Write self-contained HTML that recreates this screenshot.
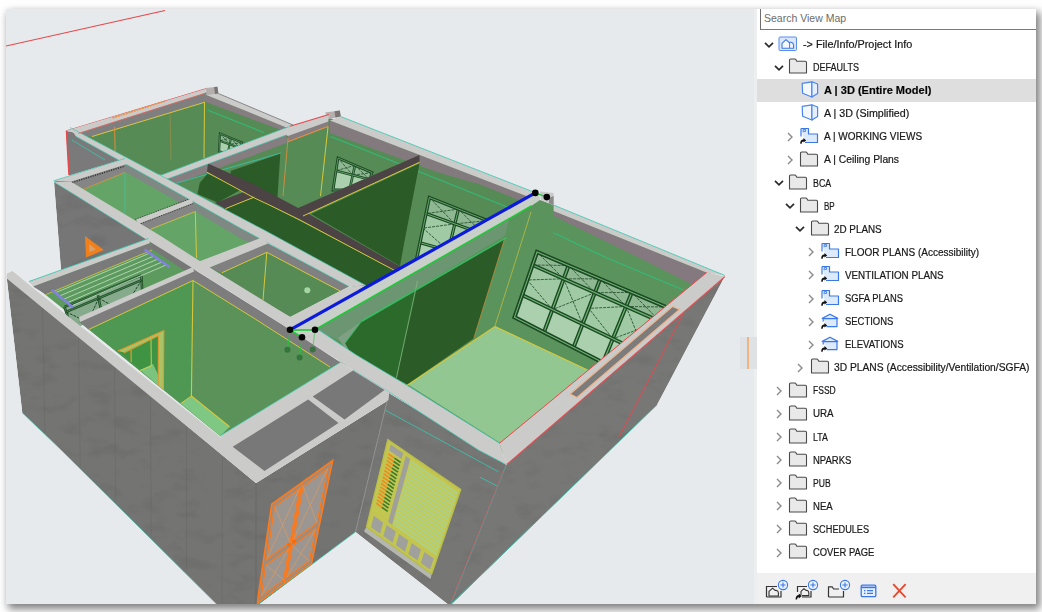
<!DOCTYPE html>
<html><head><meta charset="utf-8"><title>View Map</title>
<style>
html,body{margin:0;padding:0;background:#fff}
body{width:1042px;height:612px;overflow:hidden;position:relative;font-family:"Liberation Sans",sans-serif}
.shot{position:absolute;left:6px;top:9px;width:1030px;height:595px;background:#e6eaec;box-shadow:3px 4px 8px 1px rgba(0,0,0,.5);overflow:hidden}
.view{position:absolute;left:0;top:0;width:747.6px;height:595px;overflow:hidden}
.vstrip{position:absolute;left:747.6px;top:0;width:3.4px;height:595px;background:#eceeef}
.view svg{position:absolute;left:-6px;top:-9px}
.handle{position:absolute;left:734px;top:328px;width:17px;height:32px;background:#dee2e4}
.handle i{position:absolute;left:6.5px;top:0;height:32px;border-left:2px solid #f0b480}
.panel{position:absolute;left:751px;top:0;width:279px;height:595px;background:#fff}
.search{position:absolute;left:3px;top:0;width:276px;height:20px;border-left:1px solid #6e6e6e;border-bottom:1px solid #7a7a7a;box-sizing:content-box;background:#fff}
.search span{position:absolute;left:3px;top:3px;font-size:10.5px;color:#6b6b6b;white-space:nowrap;transform-origin:0 50%}
.row{position:absolute;left:0;width:279px;height:23px}
.row.sel{background:#dedede;left:0}
.row .ch,.row .ic{position:absolute}
.lb{position:absolute;top:5.6px;font-size:10px;line-height:13px;color:#141414;white-space:nowrap;transform-origin:0 50%;-webkit-text-stroke:0.2px #222}
.lb.b{font-weight:bold;color:#000}
.tb{position:absolute;left:0;top:564px;width:279px;height:31px;background:#f0f0f0}
.tb svg{position:absolute}
</style></head>
<body>
<div class="shot">
<div class="view">
<svg width="1042" height="612" viewBox="0 0 1042 612">
<defs><filter id="conc" x="0" y="0" width="100%" height="100%" color-interpolation-filters="sRGB"><feTurbulence type="fractalNoise" baseFrequency="0.035 0.07" numOctaves="4" seed="11" result="t"/><feColorMatrix in="t" type="matrix" values="0.4 0.4 0.2 0 0  0.4 0.4 0.2 0 0  0.4 0.4 0.2 0 0  0 0 0 0 1" result="g"/><feComponentTransfer in="g" result="g2"><feFuncR type="linear" slope="0.26" intercept="0.87"/><feFuncG type="linear" slope="0.26" intercept="0.87"/><feFuncB type="linear" slope="0.26" intercept="0.87"/></feComponentTransfer><feBlend in="SourceGraphic" in2="g2" mode="multiply" result="b"/><feComposite in="b" in2="SourceGraphic" operator="in"/></filter><clipPath id="cw1"><polygon points="72.0,131.0 205.0,92.0 290.0,126.2 161.6,174.9"/></clipPath><clipPath id="cw2"><polygon points="288.0,132.0 330.0,118.0 419.5,155.0 297.0,208.5 283.0,198.0"/></clipPath><clipPath id="cw3"><polygon points="400.0,140.0 536.0,193.5 398.0,270.0"/></clipPath><clipPath id="cw4"><polygon points="315.0,330.0 535.0,198.0 706.6,272.6 499.6,443.2 340.0,362.0"/></clipPath></defs>
<polyline points="6.0,46.0 165.0,10.5" fill="none" stroke="#e8484c" stroke-width="1.2"/>
<g filter="url(#conc)">
<polygon points="6.5,276.0 256.0,483.0 256.0,606.0 218.0,606.0 61.0,450.0 22.3,413.0" fill="#747473"/>
<polygon points="256.0,483.0 388.5,400.0 389.0,393.0 355.5,532.0 257.0,606.0 256.0,606.0" fill="#737372"/>
<polygon points="389.0,393.0 506.3,464.7 450.0,606.0 355.5,532.0" fill="#767675"/>
<polygon points="724.5,277.0 506.3,464.7 450.0,606.0 657.0,405.0" fill="#777776"/>
<polygon points="54.0,182.0 150.0,237.0 148.5,241.0 61.0,270.0" fill="#767676"/>
</g>
<polyline points="42.5,307.9 44.9,432.9" fill="none" stroke="#5c5c5c" stroke-width="0.8" opacity="0.35"/>
<polyline points="78.5,337.8 80.3,467.3" fill="none" stroke="#5c5c5c" stroke-width="0.8" opacity="0.35"/>
<polyline points="114.5,367.6 115.7,501.6" fill="none" stroke="#5c5c5c" stroke-width="0.8" opacity="0.35"/>
<polyline points="150.5,397.5 151.1,535.9" fill="none" stroke="#5c5c5c" stroke-width="0.8" opacity="0.35"/>
<polyline points="186.5,427.4 186.5,570.3" fill="none" stroke="#5c5c5c" stroke-width="0.8" opacity="0.35"/>
<polyline points="222.5,457.3 221.9,604.0" fill="none" stroke="#5c5c5c" stroke-width="0.8" opacity="0.35"/>
<polygon points="85.0,236.0 86.0,257.5 103.8,250.0" fill="#f0801c"/>
<polygon points="89.0,244.0 89.5,252.0 96.0,249.5" fill="#d9a070"/>
<polygon points="271.7,504.2 332.6,460.6 311.4,563.8 257.2,603.4" fill="#a08c7c"/>
<polygon points="274.6,506.6 299.4,488.8 290.1,542.3 266.7,559.3" fill="#9b9691" stroke="#ff7a1a" stroke-width="1.1"/>
<polyline points="274.6,506.6 290.1,542.3" fill="none" stroke="#e09a60" stroke-width="0.7"/>
<polyline points="299.4,488.8 266.7,559.3" fill="none" stroke="#e09a60" stroke-width="0.7"/>
<polygon points="265.8,565.2 289.0,548.4 283.6,579.7 261.2,596.1" fill="#9b9691" stroke="#ff7a1a" stroke-width="1.1"/>
<polyline points="265.8,565.2 283.6,579.7" fill="none" stroke="#e09a60" stroke-width="0.7"/>
<polyline points="289.0,548.4 261.2,596.1" fill="none" stroke="#e09a60" stroke-width="0.7"/>
<polygon points="303.1,486.2 327.9,468.4 316.9,522.9 293.5,539.9" fill="#9b9691" stroke="#ff7a1a" stroke-width="1.1"/>
<polyline points="303.1,486.2 316.9,522.9" fill="none" stroke="#e09a60" stroke-width="0.7"/>
<polyline points="327.9,468.4 293.5,539.9" fill="none" stroke="#e09a60" stroke-width="0.7"/>
<polygon points="292.4,545.9 315.6,529.1 309.2,561.0 286.8,577.3" fill="#9b9691" stroke="#ff7a1a" stroke-width="1.1"/>
<polyline points="292.4,545.9 309.2,561.0" fill="none" stroke="#e09a60" stroke-width="0.7"/>
<polyline points="315.6,529.1 286.8,577.3" fill="none" stroke="#e09a60" stroke-width="0.7"/>
<polygon points="271.7,504.2 332.6,460.6 311.4,563.8 257.2,603.4" fill="none" stroke="#ff7a1a" stroke-width="1.6"/>
<polyline points="302.1,482.4 284.3,583.6" fill="none" stroke="#ff7a1a" stroke-width="1.6"/>
<circle cx="289.2" cy="544.8" r="1.8" fill="#ff6a00"/>
<circle cx="293.7" cy="541.5" r="1.8" fill="#ff6a00"/>
<polygon points="387.8,439.4 460.8,489.4 431.7,574.0 366.4,527.0" fill="#c2c650"/>
<polygon points="366.4,527.0 431.7,574.0 430.5,579.0 364.0,531.5" fill="#b4b6b0"/>
<polygon points="410.9,459.4 458.2,491.8 436.2,556.1 392.7,525.2" fill="#c7cb4c"/>
<polyline points="410.4,461.3 457.5,493.7" fill="none" stroke="#a9cf92" stroke-width="2.0"/>
<polyline points="409.3,465.2 456.2,497.5" fill="none" stroke="#a9cf92" stroke-width="2.0"/>
<polyline points="408.3,469.0 454.9,501.2" fill="none" stroke="#a9cf92" stroke-width="2.0"/>
<polyline points="407.2,472.9 453.7,505.0" fill="none" stroke="#a9cf92" stroke-width="2.0"/>
<polyline points="406.1,476.8 452.4,508.8" fill="none" stroke="#a9cf92" stroke-width="2.0"/>
<polyline points="405.0,480.7 451.1,512.6" fill="none" stroke="#a9cf92" stroke-width="2.0"/>
<polyline points="404.0,484.5 449.8,516.4" fill="none" stroke="#a9cf92" stroke-width="2.0"/>
<polyline points="402.9,488.4 448.5,520.2" fill="none" stroke="#a9cf92" stroke-width="2.0"/>
<polyline points="401.8,492.3 447.2,524.0" fill="none" stroke="#a9cf92" stroke-width="2.0"/>
<polyline points="400.8,496.1 445.9,527.7" fill="none" stroke="#a9cf92" stroke-width="2.0"/>
<polyline points="399.7,500.0 444.6,531.5" fill="none" stroke="#a9cf92" stroke-width="2.0"/>
<polyline points="398.6,503.9 443.3,535.3" fill="none" stroke="#a9cf92" stroke-width="2.0"/>
<polyline points="397.6,507.8 442.0,539.1" fill="none" stroke="#a9cf92" stroke-width="2.0"/>
<polyline points="396.5,511.6 440.7,542.9" fill="none" stroke="#a9cf92" stroke-width="2.0"/>
<polyline points="395.4,515.5 439.4,546.7" fill="none" stroke="#a9cf92" stroke-width="2.0"/>
<polyline points="394.3,519.4 438.1,550.5" fill="none" stroke="#a9cf92" stroke-width="2.0"/>
<polyline points="393.3,523.3 436.8,554.2" fill="none" stroke="#a9cf92" stroke-width="2.0"/>
<polygon points="405.8,455.9 410.2,458.9 392.1,524.7 388.1,521.9" fill="#9fa09a"/>
<polyline points="388.4,454.0 394.5,458.2" fill="none" stroke="#ef8a1e" stroke-width="1.6"/>
<polyline points="394.5,458.2 400.7,462.5" fill="none" stroke="#3f7a2a" stroke-width="1.6"/>
<polyline points="387.6,457.3 393.7,461.5" fill="none" stroke="#ef8a1e" stroke-width="1.6"/>
<polyline points="393.7,461.5 399.8,465.7" fill="none" stroke="#3f7a2a" stroke-width="1.6"/>
<polyline points="386.8,460.6 392.9,464.8" fill="none" stroke="#ef8a1e" stroke-width="1.6"/>
<polyline points="392.9,464.8 398.9,469.0" fill="none" stroke="#3f7a2a" stroke-width="1.6"/>
<polyline points="386.0,463.9 392.0,468.1" fill="none" stroke="#ef8a1e" stroke-width="1.6"/>
<polyline points="392.0,468.1 398.1,472.2" fill="none" stroke="#3f7a2a" stroke-width="1.6"/>
<polyline points="385.2,467.2 391.2,471.3" fill="none" stroke="#ef8a1e" stroke-width="1.6"/>
<polyline points="391.2,471.3 397.2,475.5" fill="none" stroke="#3f7a2a" stroke-width="1.6"/>
<polyline points="384.3,470.4 390.3,474.6" fill="none" stroke="#ef8a1e" stroke-width="1.6"/>
<polyline points="390.3,474.6 396.3,478.8" fill="none" stroke="#3f7a2a" stroke-width="1.6"/>
<polyline points="383.5,473.7 389.5,477.9" fill="none" stroke="#ef8a1e" stroke-width="1.6"/>
<polyline points="389.5,477.9 395.5,482.0" fill="none" stroke="#3f7a2a" stroke-width="1.6"/>
<polyline points="382.7,477.0 388.7,481.1" fill="none" stroke="#ef8a1e" stroke-width="1.6"/>
<polyline points="388.7,481.1 394.6,485.3" fill="none" stroke="#3f7a2a" stroke-width="1.6"/>
<polyline points="381.9,480.3 387.8,484.4" fill="none" stroke="#ef8a1e" stroke-width="1.6"/>
<polyline points="387.8,484.4 393.7,488.5" fill="none" stroke="#3f7a2a" stroke-width="1.6"/>
<polyline points="381.1,483.5 387.0,487.7" fill="none" stroke="#ef8a1e" stroke-width="1.6"/>
<polyline points="387.0,487.7 392.9,491.8" fill="none" stroke="#3f7a2a" stroke-width="1.6"/>
<polyline points="380.3,486.8 386.1,490.9" fill="none" stroke="#ef8a1e" stroke-width="1.6"/>
<polyline points="386.1,490.9 392.0,495.1" fill="none" stroke="#3f7a2a" stroke-width="1.6"/>
<polyline points="379.4,490.1 385.3,494.2" fill="none" stroke="#ef8a1e" stroke-width="1.6"/>
<polyline points="385.3,494.2 391.1,498.3" fill="none" stroke="#3f7a2a" stroke-width="1.6"/>
<polyline points="378.6,493.4 384.4,497.5" fill="none" stroke="#ef8a1e" stroke-width="1.6"/>
<polyline points="384.4,497.5 390.3,501.6" fill="none" stroke="#3f7a2a" stroke-width="1.6"/>
<polyline points="377.8,496.7 383.6,500.8" fill="none" stroke="#ef8a1e" stroke-width="1.6"/>
<polyline points="383.6,500.8 389.4,504.8" fill="none" stroke="#3f7a2a" stroke-width="1.6"/>
<polyline points="377.0,499.9 382.8,504.0" fill="none" stroke="#ef8a1e" stroke-width="1.6"/>
<polyline points="382.8,504.0 388.5,508.1" fill="none" stroke="#3f7a2a" stroke-width="1.6"/>
<polyline points="376.2,503.2 381.9,507.3" fill="none" stroke="#ef8a1e" stroke-width="1.6"/>
<polyline points="381.9,507.3 387.7,511.4" fill="none" stroke="#3f7a2a" stroke-width="1.6"/>
<polygon points="373.8,515.8 383.1,522.5 380.1,533.8 371.0,527.2" fill="#a0a09c"/>
<polygon points="386.5,524.9 395.8,531.5 392.6,542.7 383.4,536.1" fill="#a0a09c"/>
<polygon points="399.1,533.9 408.4,540.5 405.0,551.7 395.9,545.1" fill="#a0a09c"/>
<polygon points="411.7,542.9 421.1,549.5 417.5,560.6 408.3,554.0" fill="#a0a09c"/>
<polygon points="424.4,551.9 433.7,558.6 430.0,569.6 420.8,563.0" fill="#a0a09c"/>
<polygon points="390.8,444.5 403.2,453.0 401.6,459.1 389.3,450.6" fill="#a0a09c"/>
<polygon points="387.8,439.4 460.8,489.4 431.7,574.0 366.4,527.0" fill="none" stroke="#b9bd48" stroke-width="1.2"/>
<polyline points="503.0,472.0 451.0,602.0" fill="none" stroke="#e8484c" stroke-width="1.1" opacity="0.9"/>
<polyline points="683.0,314.0 619.0,437.0" fill="none" stroke="#e8484c" stroke-width="1.1" opacity="0.85"/>
<polyline points="612.0,440.0 462.0,590.0" fill="none" stroke="#e8484c" stroke-width="0.9" opacity="0.35"/>
<polyline points="385.0,410.0 498.3,471.7" fill="none" stroke="#35c9b2" stroke-width="1" opacity="0.8"/>
<polyline points="479.5,477.0 497.0,486.0" fill="none" stroke="#35c9b2" stroke-width="1" opacity="0.8"/>
<polyline points="657.0,405.0 450.0,605.0" fill="none" stroke="#35c9b2" stroke-width="1" opacity="0.7"/>
<polyline points="257.0,605.0 355.5,532.0" fill="none" stroke="#35c9b2" stroke-width="1" opacity="0.7"/>
<polyline points="22.3,413.0 61.0,450.0 218.0,605.0" fill="none" stroke="#35c9b2" stroke-width="1" opacity="0.5"/>
<polyline points="389.0,393.0 355.5,532.0" fill="none" stroke="#8a8a88" stroke-width="1"/>
<polyline points="506.3,464.7 450.0,606.0" fill="none" stroke="#5f8f8a" stroke-width="1.3" opacity="0.8"/>
<polyline points="256.0,483.0 256.0,606.0" fill="none" stroke="#6a6a69" stroke-width="1.2"/>
<polygon points="72.0,131.0 205.0,92.0 290.0,128.0 163.0,178.0" fill="#568b56"/>
<polygon points="78.0,133.5 205.0,93.5 205.0,102.5 92.0,137.0" fill="#7f7f7f"/>
<polygon points="205.0,94.4 286.3,127.4 284.0,131.0 205.0,101.8" fill="#857d80"/>
<polyline points="92.0,136.5 204.5,102.3" fill="none" stroke="#d6c83c" stroke-width="1"/>
<polyline points="204.5,102.0 204.0,158.0" fill="none" stroke="#d6c83c" stroke-width="1"/>
<polyline points="207.4,110.0 264.3,132.7" fill="none" stroke="#2fbf7a" stroke-width="1.2" opacity="0.85"/>
<polyline points="114.5,127.0 115.2,152.0" fill="none" stroke="#ea8f3a" stroke-width="1.2" opacity="0.75"/>
<polyline points="170.0,112.0 171.0,160.0" fill="none" stroke="#ea8f3a" stroke-width="1" opacity="0.35"/>
<polygon points="66.0,131.0 72.0,132.0 124.0,159.0 69.0,175.5" fill="#7a7a7a"/>
<polyline points="66.5,131.0 69.0,175.0" fill="none" stroke="#e8484c" stroke-width="1.5"/>
<polyline points="66.0,131.0 205.9,88.7" fill="none" stroke="#e8484c" stroke-width="1.2"/>
<polyline points="72.0,140.0 105.0,160.0" fill="none" stroke="#35c9b2" stroke-width="1" opacity="0.8"/>
<polygon points="165.0,178.0 288.0,132.0 330.0,118.0 540.0,198.0 362.0,292.0" fill="#568b56"/>
<polygon points="288.0,135.0 328.5,120.0 328.5,127.0 288.0,142.0" fill="#857d80"/>
<polyline points="288.0,141.7 328.3,126.3" fill="none" stroke="#ea8f3a" stroke-width="1.2"/>
<polyline points="328.0,127.0 320.5,196.0" fill="none" stroke="#d6c83c" stroke-width="1"/>
<polyline points="288.0,138.0 283.0,196.0" fill="none" stroke="#ea8f3a" stroke-width="1" opacity="0.8"/>
<polygon points="168.6,178.6 286.2,135.0 287.0,143.0 176.7,183.5" fill="#857d80"/>
<polyline points="177.0,183.0 281.0,153.0" fill="none" stroke="#35c9b2" stroke-width="1.2" opacity="0.7"/>
<polygon points="330.0,120.5 538.0,200.5 536.0,207.0 480.0,184.5 440.0,173.0 330.0,133.0" fill="#837a7e"/>
<polyline points="330.7,136.5 440.0,180.0 522.0,213.0" fill="none" stroke="#2fbf7a" stroke-width="1.3" opacity="0.85"/>
<polygon points="199.7,183.0 207.6,173.8 240.7,189.7 217.7,202.6 197.5,194.0" fill="#2b5b26"/>
<polygon points="230.6,171.0 280.3,153.7 277.4,198.0 231.0,176.0" fill="#2b5b26"/>
<polygon points="222.0,209.0 255.0,197.4 395.5,270.9 365.0,290.0" fill="#2b5b26"/>
<polygon points="311.0,214.0 419.5,163.4 404.4,241.7 400.0,266.0" fill="#2b5b26"/>
<g clip-path="url(#cw1)">
<polygon points="220.0,133.5 242.0,142.7 236.0,156.0 219.0,151.4" fill="#9fcaa3"/>
<polygon points="220.0,133.5 242.0,142.7 239.6,148.0 219.6,140.7" fill="#1d4824" opacity="0.13"/>
<polygon points="219.6,140.7 239.6,148.0 236.0,156.0 219.0,151.4" fill="#ffffff" opacity="0.13"/>
<polyline points="220.0,133.5 229.6,144.3" fill="none" stroke="#1d4824" stroke-width="0.8" stroke-dasharray="3 1"/>
<polyline points="231.0,138.1 219.6,140.7" fill="none" stroke="#1d4824" stroke-width="0.8" stroke-dasharray="3 1"/>
<polyline points="231.0,138.1 239.6,148.0" fill="none" stroke="#1d4824" stroke-width="0.8" stroke-dasharray="3 1"/>
<polyline points="242.0,142.7 229.6,144.3" fill="none" stroke="#1d4824" stroke-width="0.8" stroke-dasharray="3 1"/>
<polyline points="231.0,138.1 227.5,153.7" fill="none" stroke="#1d4824" stroke-width="2"/>
<polyline points="231.0,138.1 227.5,153.7" fill="none" stroke="#6db573" stroke-width="0.6"/>
<polyline points="219.6,140.7 239.6,148.0" fill="none" stroke="#1d4824" stroke-width="2"/>
<polyline points="219.6,140.7 239.6,148.0" fill="none" stroke="#6db573" stroke-width="0.6"/>
<polygon points="220.0,133.5 242.0,142.7 236.0,156.0 219.0,151.4" fill="none" stroke="#1d4824" stroke-width="2.2"/>
<polygon points="220.0,133.5 242.0,142.7 236.0,156.0 219.0,151.4" fill="none" stroke="#6db573" stroke-width="0.55"/>
</g>
<g clip-path="url(#cw2)">
<polygon points="338.0,158.0 372.0,172.6 366.0,190.0 333.0,190.0" fill="#9fcaa3"/>
<polygon points="338.0,158.0 372.0,172.6 369.6,179.6 336.0,170.8" fill="#1d4824" opacity="0.13"/>
<polygon points="336.0,170.8 369.6,179.6 366.0,190.0 333.0,190.0" fill="#ffffff" opacity="0.13"/>
<polyline points="338.0,158.0 352.8,175.2" fill="none" stroke="#1d4824" stroke-width="0.8" stroke-dasharray="3 1"/>
<polyline points="355.0,165.3 336.0,170.8" fill="none" stroke="#1d4824" stroke-width="0.8" stroke-dasharray="3 1"/>
<polyline points="355.0,165.3 369.6,179.6" fill="none" stroke="#1d4824" stroke-width="0.8" stroke-dasharray="3 1"/>
<polyline points="372.0,172.6 352.8,175.2" fill="none" stroke="#1d4824" stroke-width="0.8" stroke-dasharray="3 1"/>
<polyline points="355.0,165.3 349.5,190.0" fill="none" stroke="#1d4824" stroke-width="2.6"/>
<polyline points="355.0,165.3 349.5,190.0" fill="none" stroke="#6db573" stroke-width="0.78"/>
<polyline points="336.0,170.8 369.6,179.6" fill="none" stroke="#1d4824" stroke-width="2.6"/>
<polyline points="336.0,170.8 369.6,179.6" fill="none" stroke="#6db573" stroke-width="0.78"/>
<polygon points="338.0,158.0 372.0,172.6 366.0,190.0 333.0,190.0" fill="none" stroke="#1d4824" stroke-width="2.8"/>
<polygon points="338.0,158.0 372.0,172.6 366.0,190.0 333.0,190.0" fill="none" stroke="#6db573" stroke-width="0.7"/>
</g>
<g clip-path="url(#cw3)">
<polygon points="429.4,197.5 487.3,220.6 472.0,275.0 416.0,262.0" fill="#9fcaa3"/>
<polygon points="429.4,197.5 487.3,220.6 483.5,234.2 426.0,213.6" fill="#1d4824" opacity="0.13"/>
<polygon points="420.0,242.7 476.6,258.7 472.0,275.0 416.0,262.0" fill="#ffffff" opacity="0.13"/>
<polyline points="429.4,197.5 454.8,223.9" fill="none" stroke="#1d4824" stroke-width="0.8" stroke-dasharray="3 1"/>
<polyline points="458.4,209.1 426.0,213.6" fill="none" stroke="#1d4824" stroke-width="0.8" stroke-dasharray="3 1"/>
<polyline points="458.4,209.1 483.5,234.2" fill="none" stroke="#1d4824" stroke-width="0.8" stroke-dasharray="3 1"/>
<polyline points="487.3,220.6 454.8,223.9" fill="none" stroke="#1d4824" stroke-width="0.8" stroke-dasharray="3 1"/>
<polyline points="454.8,223.9 423.0,228.1 448.3,250.7" fill="none" stroke="#1d4824" stroke-width="0.8" stroke-dasharray="3 1"/>
<polyline points="483.5,234.2 451.5,237.3 476.6,258.7" fill="none" stroke="#1d4824" stroke-width="0.8" stroke-dasharray="3 1"/>
<polyline points="458.4,209.1 444.0,268.5" fill="none" stroke="#1d4824" stroke-width="3.2"/>
<polyline points="458.4,209.1 444.0,268.5" fill="none" stroke="#6db573" stroke-width="0.96"/>
<polyline points="426.0,213.6 483.5,234.2" fill="none" stroke="#1d4824" stroke-width="3.2"/>
<polyline points="426.0,213.6 483.5,234.2" fill="none" stroke="#6db573" stroke-width="0.96"/>
<polyline points="420.0,242.7 476.6,258.7" fill="none" stroke="#1d4824" stroke-width="3.2"/>
<polyline points="420.0,242.7 476.6,258.7" fill="none" stroke="#6db573" stroke-width="0.96"/>
<polygon points="429.4,197.5 487.3,220.6 472.0,275.0 416.0,262.0" fill="none" stroke="#1d4824" stroke-width="3.4"/>
<polygon points="429.4,197.5 487.3,220.6 472.0,275.0 416.0,262.0" fill="none" stroke="#6db573" stroke-width="0.85"/>
</g>
<polygon points="215.0,203.0 254.4,187.9 254.4,197.0 225.4,208.7" fill="#4b4344"/>
<polygon points="208.0,163.5 254.4,184.5 270.0,193.0 300.0,209.0 380.0,255.0 401.8,267.4 395.5,270.9 380.0,262.7 300.0,220.0 270.0,205.3 254.4,198.0 206.9,172.2" fill="#4b4344"/>
<polygon points="297.0,208.5 419.5,155.0 419.5,162.0 303.0,216.0" fill="#4b4344"/>
<polyline points="206.9,172.2 254.4,198.0 270.0,205.3 300.0,220.0 380.0,262.7 395.5,270.9" fill="none" stroke="#d6c83c" stroke-width="1"/>
<polyline points="225.4,208.7 254.4,197.0" fill="none" stroke="#d6c83c" stroke-width="1"/>
<polyline points="303.0,216.0 419.5,162.3" fill="none" stroke="#d6c83c" stroke-width="1"/>
<polygon points="54.0,181.0 125.0,159.0 262.0,237.0 200.0,268.0" fill="#64a567"/>
<polygon points="70.7,181.5 125.0,164.6 125.0,172.0 84.0,189.0" fill="#858585"/>
<polyline points="72.0,182.5 125.0,166.0" fill="none" stroke="#3a3a3a" stroke-width="1.6" stroke-dasharray="1.2 1.2"/>
<polyline points="84.0,189.0 125.0,172.5" fill="none" stroke="#ea8f3a" stroke-width="1" opacity="0.8"/>
<polygon points="125.0,163.5 150.0,177.4 193.0,201.5 242.8,229.5 262.0,240.5 262.0,249.0 239.0,237.5 193.0,210.0 150.0,186.0 125.0,172.0" fill="#7f8883"/>
<polygon points="138.5,224.0 193.0,203.0 195.3,211.5 150.7,229.2" fill="#858585"/>
<polyline points="138.5,224.3 193.0,203.3" fill="none" stroke="#3a3a3a" stroke-width="1.4" stroke-dasharray="1.2 1.2"/>
<polyline points="135.5,219.5 191.5,198.3" fill="none" stroke="#3a3a3a" stroke-width="1.2" stroke-dasharray="1.2 1.2"/>
<polyline points="150.7,229.2 195.3,211.5" fill="none" stroke="#d6c83c" stroke-width="1" opacity="0.8"/>
<polyline points="195.3,211.5 196.5,258.0" fill="none" stroke="#d6c83c" stroke-width="1"/>
<polyline points="125.0,172.0 125.0,215.0" fill="none" stroke="#35c9b2" stroke-width="1" opacity="0.6"/>
<polygon points="206.0,269.0 262.0,240.5 349.0,286.5 290.2,316.9" fill="#568b56"/>
<polygon points="262.0,240.5 349.0,286.5 340.0,291.0 266.8,252.3" fill="#808080"/>
<polygon points="210.0,268.0 262.0,242.0 266.8,252.3 221.8,272.8" fill="#808080"/>
<polyline points="221.8,272.8 266.8,252.3 340.0,291.0" fill="none" stroke="#d6c83c" stroke-width="1"/>
<polyline points="266.8,252.3 263.0,300.0" fill="none" stroke="#d6c83c" stroke-width="1"/>
<circle cx="307.3" cy="290.3" r="3" fill="#a5d6a2"/>
<polygon points="29.0,281.5 148.5,240.0 200.0,267.0 77.0,320.0" fill="#5c9a5e"/>
<polygon points="33.0,286.5 150.0,243.0 152.0,250.0 46.0,294.5" fill="#7a7a7a"/>
<polyline points="46.0,294.5 152.0,250.0" fill="none" stroke="#d6c83c" stroke-width="1" opacity="0.8"/>
<polygon points="150.0,241.0 193.0,268.0 191.0,275.0 152.0,249.0" fill="#777777"/>
<polygon points="64.5,306.8 141.3,275.3 142.5,297.0 72.0,330.0" fill="#86ab8c"/>
<polyline points="64.5,306.8 72.0,330.0" fill="none" stroke="#1f4a26" stroke-width="2.6"/>
<polyline points="64.5,306.8 72.0,330.0" fill="none" stroke="#5aa562" stroke-width="0.7"/>
<polyline points="97.5,293.3 102.3,315.8" fill="none" stroke="#1f4a26" stroke-width="2.6"/>
<polyline points="97.5,293.3 102.3,315.8" fill="none" stroke="#5aa562" stroke-width="0.7"/>
<polyline points="141.3,275.3 142.5,297.0" fill="none" stroke="#1f4a26" stroke-width="2.6"/>
<polyline points="141.3,275.3 142.5,297.0" fill="none" stroke="#5aa562" stroke-width="0.7"/>
<polyline points="64.5,306.8 141.3,275.3" fill="none" stroke="#1f4a26" stroke-width="2.4"/>
<polyline points="64.5,306.8 141.3,275.3" fill="none" stroke="#5aa562" stroke-width="0.6"/>
<polyline points="66.2,311.9 141.6,280.1" fill="none" stroke="#1f4a26" stroke-width="2.4"/>
<polyline points="66.2,311.9 141.6,280.1" fill="none" stroke="#5aa562" stroke-width="0.6"/>
<polyline points="66.2,311.9 85.5,321.1" fill="none" stroke="#1f4a26" stroke-width="1" stroke-dasharray="3 1"/>
<polyline points="98.6,298.2 89.0,319.5" fill="none" stroke="#1f4a26" stroke-width="1" stroke-dasharray="3 1"/>
<polyline points="98.6,298.2 115.4,307.3" fill="none" stroke="#1f4a26" stroke-width="1" stroke-dasharray="3 1"/>
<polyline points="141.6,280.1 128.2,301.4" fill="none" stroke="#1f4a26" stroke-width="1" stroke-dasharray="3 1"/>
<polyline points="56.0,292.5 150.0,253.0" fill="none" stroke="#b9d9bb" stroke-width="0.9"/>
<polyline points="60.0,295.8 154.0,256.0" fill="none" stroke="#b9d9bb" stroke-width="0.9"/>
<polyline points="64.0,299.1 158.0,259.0" fill="none" stroke="#b9d9bb" stroke-width="0.9"/>
<polyline points="68.0,302.4 162.0,262.0" fill="none" stroke="#b9d9bb" stroke-width="0.9"/>
<polyline points="72.0,305.7 166.0,265.0" fill="none" stroke="#b9d9bb" stroke-width="0.9"/>
<polyline points="52.0,290.0 73.0,307.5" fill="none" stroke="#8482e0" stroke-width="2.6"/>
<polyline points="144.6,249.6 169.7,267.0" fill="none" stroke="#8482e0" stroke-width="2.6"/>
<polygon points="79.0,321.5 193.0,271.5 340.3,362.5 220.1,436.0" fill="#5a925a"/>
<polygon points="79.0,321.5 193.0,271.5 191.5,395.0 181.0,403.0" fill="#4f9853"/>
<polygon points="79.0,321.5 193.0,271.5 193.0,280.5 88.7,329.5" fill="#7d7d7d"/>
<polyline points="88.7,329.5 193.0,280.5" fill="none" stroke="#d6c83c" stroke-width="1"/>
<polygon points="193.0,268.7 288.0,328.3 302.0,337.0 340.3,362.5 330.0,367.0 254.9,318.8 193.0,280.5" fill="#7d7d7d"/>
<polyline points="193.0,280.5 254.9,318.8 330.0,367.0" fill="none" stroke="#d6c83c" stroke-width="1"/>
<polygon points="118.0,351.0 163.7,330.7 163.3,389.7" fill="#3f9444"/>
<polygon points="118.0,351.0 163.7,330.7 163.3,389.7 158.2,385.5 158.4,335.5 124.0,352.5" fill="#a9c468"/>
<polygon points="140.0,370.0 153.0,364.0 158.2,375.0 158.2,385.5" fill="#7cc47e"/>
<polyline points="118.0,351.0 163.7,330.7 163.3,389.7" fill="none" stroke="#e59a2c" stroke-width="1.3"/>
<polyline points="124.0,353.0 158.4,335.8 158.2,385.0" fill="none" stroke="#e59a2c" stroke-width="1"/>
<polyline points="131.0,349.5 131.3,362.0" fill="none" stroke="#e59a2c" stroke-width="1.2"/>
<polyline points="151.0,339.5 151.3,366.0 140.0,370.5" fill="none" stroke="#c6cf50" stroke-width="1"/>
<polygon points="180.7,403.5 191.4,396.0 229.6,426.8 220.1,436.0" fill="#7fc883"/>
<polyline points="193.0,280.5 191.4,396.0 229.6,426.8" fill="none" stroke="#d6c83c" stroke-width="1.1"/>
<polyline points="180.7,403.5 191.4,396.0" fill="none" stroke="#d6c83c" stroke-width="1"/>
<polygon points="315.0,330.0 535.0,198.0 553.0,205.0 716.0,276.0 506.0,455.0 340.0,362.0" fill="#5a935b"/>
<polygon points="553.6,211.0 706.6,272.6 693.0,285.0 640.0,258.3 553.7,216.0" fill="#84797e"/>
<polyline points="553.0,232.5 607.0,258.0 683.4,290.0" fill="none" stroke="#2fbf7a" stroke-width="1.3" opacity="0.85"/>
<polygon points="408.3,384.8 495.4,326.4 587.5,370.0 600.0,376.0 500.7,443.2" fill="#93c792"/>
<polygon points="315.0,330.1 509.6,218.2 504.7,236.0 361.3,321.5 345.0,343.0" fill="#6c9672"/>
<polygon points="345.0,343.0 361.3,321.5 504.6,238.6 473.8,338.2 407.3,384.5 352.0,356.0" fill="#2b5b26"/>
<polygon points="338.0,338.0 361.3,321.5 356.5,352.0 350.0,356.0" fill="#7fa085"/>
<polygon points="352.0,356.0 345.0,343.0 361.3,321.5 417.0,289.3 396.4,378.5" fill="#2c6a2b"/>
<polyline points="417.5,281.0 396.4,378.0" fill="none" stroke="#86b886" stroke-width="0.8"/>
<polyline points="504.6,238.6 473.8,338.2" fill="none" stroke="#ea8f3a" stroke-width="1" opacity="0.6"/>
<polyline points="495.0,326.6 407.0,385.5" fill="none" stroke="#d6c83c" stroke-width="1.2"/>
<polyline points="495.0,326.6 587.5,370.0" fill="none" stroke="#d6c83c" stroke-width="1.2"/>
<polyline points="531.0,212.0 495.0,326.0" fill="none" stroke="#d6c83c" stroke-width="0.8" opacity="0.8"/>
<g clip-path="url(#cw4)">
<polygon points="537.0,252.0 666.0,307.0 635.0,379.0 514.5,317.2" fill="#9fcaa3"/>
<polygon points="537.0,252.0 666.0,307.0 659.8,321.4 532.5,265.0" fill="#1d4824" opacity="0.13"/>
<polygon points="522.1,295.0 645.5,354.5 635.0,379.0 514.5,317.2" fill="#ffffff" opacity="0.13"/>
<polyline points="537.0,252.0 563.7,278.8" fill="none" stroke="#1d4824" stroke-width="0.8" stroke-dasharray="3 1"/>
<polyline points="568.6,265.5 532.5,265.0" fill="none" stroke="#1d4824" stroke-width="0.8" stroke-dasharray="3 1"/>
<polyline points="568.6,265.5 594.9,292.7" fill="none" stroke="#1d4824" stroke-width="0.8" stroke-dasharray="3 1"/>
<polyline points="600.2,278.9 563.7,278.8" fill="none" stroke="#1d4824" stroke-width="0.8" stroke-dasharray="3 1"/>
<polyline points="600.2,278.9 626.1,306.5" fill="none" stroke="#1d4824" stroke-width="0.8" stroke-dasharray="3 1"/>
<polyline points="631.8,292.4 594.9,292.7" fill="none" stroke="#1d4824" stroke-width="0.8" stroke-dasharray="3 1"/>
<polyline points="631.8,292.4 659.8,321.4" fill="none" stroke="#1d4824" stroke-width="0.8" stroke-dasharray="3 1"/>
<polyline points="666.0,307.0 626.1,306.5" fill="none" stroke="#1d4824" stroke-width="0.8" stroke-dasharray="3 1"/>
<polyline points="563.7,278.8 527.3,280.0 552.4,309.6" fill="none" stroke="#1d4824" stroke-width="0.8" stroke-dasharray="3 1"/>
<polyline points="563.7,278.8 582.6,324.2" fill="none" stroke="#1d4824" stroke-width="0.8" stroke-dasharray="3 1"/>
<polyline points="594.9,292.7 552.4,309.6" fill="none" stroke="#1d4824" stroke-width="0.8" stroke-dasharray="3 1"/>
<polyline points="626.1,306.5 588.7,308.4 612.8,338.8" fill="none" stroke="#1d4824" stroke-width="0.8" stroke-dasharray="3 1"/>
<polyline points="626.1,306.5 645.5,354.5" fill="none" stroke="#1d4824" stroke-width="0.8" stroke-dasharray="3 1"/>
<polyline points="659.8,321.4 612.8,338.8" fill="none" stroke="#1d4824" stroke-width="0.8" stroke-dasharray="3 1"/>
<polyline points="568.6,265.5 544.0,332.3" fill="none" stroke="#1d4824" stroke-width="4.0"/>
<polyline points="568.6,265.5 544.0,332.3" fill="none" stroke="#6db573" stroke-width="1.2"/>
<polyline points="600.2,278.9 573.5,347.5" fill="none" stroke="#1d4824" stroke-width="4.0"/>
<polyline points="600.2,278.9 573.5,347.5" fill="none" stroke="#6db573" stroke-width="1.2"/>
<polyline points="631.8,292.4 603.1,362.6" fill="none" stroke="#1d4824" stroke-width="4.0"/>
<polyline points="631.8,292.4 603.1,362.6" fill="none" stroke="#6db573" stroke-width="1.2"/>
<polyline points="532.5,265.0 659.8,321.4" fill="none" stroke="#1d4824" stroke-width="4.0"/>
<polyline points="532.5,265.0 659.8,321.4" fill="none" stroke="#6db573" stroke-width="1.2"/>
<polyline points="522.1,295.0 645.5,354.5" fill="none" stroke="#1d4824" stroke-width="4.0"/>
<polyline points="522.1,295.0 645.5,354.5" fill="none" stroke="#6db573" stroke-width="1.2"/>
<polygon points="537.0,252.0 666.0,307.0 635.0,379.0 514.5,317.2" fill="none" stroke="#1d4824" stroke-width="4.2"/>
<polygon points="537.0,252.0 666.0,307.0 635.0,379.0 514.5,317.2" fill="none" stroke="#6db573" stroke-width="1.05"/>
</g>
<polygon points="66.0,130.7 206.0,88.7 205.5,93.0 78.4,133.2" fill="#cbcbc9"/>
<polygon points="218.4,93.5 293.3,125.1 286.3,127.4 205.0,94.4" fill="#cbcbc9"/>
<polygon points="205.8,88.0 217.4,86.7 218.4,93.5 206.5,95.0" fill="#b4aeae"/>
<polygon points="214.0,87.0 217.4,86.7 218.4,93.5 215.0,94.0" fill="#7c7474"/>
<polygon points="325.0,112.5 339.8,110.5 340.8,116.6 329.0,119.0" fill="#b4aeae"/>
<polygon points="334.5,111.3 339.8,110.5 340.8,116.6 335.5,117.6" fill="#7c7474"/>
<polygon points="540.0,191.4 553.6,193.0 553.6,205.0 541.0,200.0" fill="#c8c8c8"/>
<polygon points="549.0,198.0 553.6,196.0 553.6,205.0 549.0,203.5" fill="#8a8a8a"/>
<polygon points="158.0,174.0 161.6,174.9 290.0,126.2 328.8,114.5 328.3,121.5 288.0,136.0 286.2,135.0 168.6,178.6 164.0,179.0" fill="#cbcbc9"/>
<polyline points="290.0,126.2 328.8,114.5" fill="none" stroke="#e8484c" stroke-width="1.2"/>
<polyline points="161.6,174.9 290.0,126.2" fill="none" stroke="#35c9b2" stroke-width="0.9" opacity="0.7"/>
<polyline points="168.6,178.6 286.2,135.0" fill="none" stroke="#35c9b2" stroke-width="0.9" opacity="0.7"/>
<polyline points="218.4,93.5 293.3,125.1" fill="none" stroke="#5a5a5a" stroke-width="0.9" opacity="0.7"/>
<polygon points="340.8,116.6 540.0,194.5 538.0,200.5 330.0,120.5" fill="#cbcbc9"/>
<polygon points="553.6,205.0 724.9,275.5 706.6,272.6 553.6,211.0" fill="#cbcbc9"/>
<polyline points="340.8,116.6 540.0,194.5" fill="none" stroke="#35c9b2" stroke-width="1" opacity="0.8"/>
<polyline points="553.6,205.0 724.9,275.5" fill="none" stroke="#35c9b2" stroke-width="1" opacity="0.8"/>
<polygon points="70.0,127.5 150.0,169.9 266.0,231.0 366.0,285.5 349.0,286.5 330.0,276.2 242.8,229.5 193.0,201.5 150.0,177.4 76.0,136.5" fill="#cbcbc9"/>
<polyline points="70.0,127.5 150.0,169.9 266.0,231.0 366.0,285.5" fill="none" stroke="#35c9b2" stroke-width="0.9" opacity="0.7"/>
<polyline points="76.0,136.5 150.0,177.4 193.0,201.5 242.8,229.5 330.0,276.2 349.0,286.5" fill="none" stroke="#35c9b2" stroke-width="0.9" opacity="0.7"/>
<polygon points="53.5,180.8 125.0,158.5 127.0,164.0 70.7,181.8" fill="#cbcbc9"/>
<polyline points="53.5,180.8 125.0,158.5" fill="none" stroke="#35c9b2" stroke-width="0.9" opacity="0.7"/>
<polygon points="136.0,219.6 192.0,198.6 193.0,203.0 138.5,224.0" fill="#cbcbc9"/>
<polygon points="199.0,261.5 262.0,237.5 268.0,243.5 206.0,269.0" fill="#cbcbc9"/>
<polygon points="71.4,182.0 160.0,235.5 211.8,268.8 290.2,316.9 288.0,328.3 275.5,320.0 200.0,272.7 142.7,237.3 54.2,182.0" fill="#cbcbc9"/>
<polyline points="54.2,182.0 142.7,237.3" fill="none" stroke="#35c9b2" stroke-width="0.9" opacity="0.7"/>
<polygon points="29.0,281.5 148.5,238.5 150.0,243.0 33.0,286.5" fill="#cbcbc9"/>
<polygon points="148.0,238.0 158.0,238.0 206.0,266.0 196.0,270.0" fill="#cbcbc9"/>
<polygon points="79.0,317.0 193.0,267.0 194.0,271.5 80.0,322.0" fill="#cbcbc9"/>
<polyline points="29.0,281.5 148.5,238.5" fill="none" stroke="#35c9b2" stroke-width="1" opacity="0.8"/>
<polygon points="340.0,291.0 349.0,286.5 366.0,285.5 290.0,329.8 288.0,328.3 290.2,316.9" fill="#cbcbc9"/>
<polygon points="290.0,330.0 535.0,193.0 540.0,200.0 531.6,205.8 315.0,330.1 302.0,338.0" fill="#c9d0c9"/>
<polygon points="318.0,329.5 356.3,355.0 406.2,384.8 499.6,443.2 506.3,464.7 478.4,450.0 389.2,392.2 353.0,370.0 302.0,337.0" fill="#cbcbc9"/>
<polyline points="318.0,329.5 356.3,355.0 406.2,384.8 499.6,443.2" fill="none" stroke="#35c9b2" stroke-width="1" opacity="0.7"/>
<polyline points="353.0,370.0 389.2,392.2 478.4,450.0 506.3,464.7" fill="none" stroke="#35c9b2" stroke-width="1" opacity="0.7"/>
<polygon points="706.6,272.6 724.9,276.4 506.3,464.7 499.6,443.2" fill="#cbcbc9"/>
<polygon points="672.5,306.5 679.5,309.5 577.0,397.5 570.0,394.0" fill="#7c7c7c" stroke="#f0b48a" stroke-width="1.2"/>
<polygon points="340.3,362.5 389.2,392.2 388.5,400.0 256.0,483.0 220.1,436.0" fill="#cbcbc9"/>
<polygon points="308.2,399.5 338.5,423.0 264.5,471.0 232.7,446.7" fill="#787878"/>
<polygon points="353.0,370.5 384.5,390.0 344.5,419.5 312.7,396.5" fill="#787878"/>
<polyline points="220.1,436.0 340.3,362.5" fill="none" stroke="#35c9b2" stroke-width="1" opacity="0.7"/>
<polygon points="6.8,273.8 12.5,271.0 33.0,288.0 60.0,309.8 122.7,360.0 220.1,437.0 232.7,446.7 256.0,483.0 6.8,278.6" fill="#cbcbc9"/>
<polyline points="78.4,133.4 205.5,93.2" fill="none" stroke="#e86464" stroke-width="1" opacity="0.8"/>
<polyline points="112.5,118.0 166.0,100.8" fill="none" stroke="#ea8f3a" stroke-width="1.4" stroke-dasharray="2 0.8"/>
<polyline points="290.0,329.8 535.3,192.9" fill="none" stroke="#0c1adc" stroke-width="3.2"/>
<polyline points="315.0,329.8 531.6,205.8" fill="none" stroke="#20c838" stroke-width="1.6"/>
<polyline points="361.3,321.5 506.6,237.6" fill="none" stroke="#35c463" stroke-width="1.5" opacity="0.9"/>
<polyline points="361.3,321.5 345.0,343.0" fill="none" stroke="#35c463" stroke-width="1.2" opacity="0.8"/>
<polyline points="290.0,330.0 315.0,330.0" fill="none" stroke="#20c838" stroke-width="1.6"/>
<polyline points="290.0,330.0 302.0,337.3" fill="none" stroke="#20c838" stroke-width="1.6"/>
<polyline points="290.0,330.0 287.4,349.8" fill="none" stroke="#20c838" stroke-width="1.2" opacity="0.7"/>
<polyline points="302.0,337.3 299.6,357.5" fill="none" stroke="#20c838" stroke-width="1.2" opacity="0.7"/>
<polyline points="315.0,330.0 312.7,349.4" fill="none" stroke="#20c838" stroke-width="1.2" opacity="0.5"/>
<polyline points="535.3,192.9 546.8,197.1" fill="none" stroke="#20c838" stroke-width="1.4"/>
<circle cx="290.0" cy="329.8" r="3.3" fill="#050505"/>
<circle cx="315.0" cy="329.8" r="3.3" fill="#050505"/>
<circle cx="302.0" cy="337.3" r="3.3" fill="#050505"/>
<circle cx="535.3" cy="192.9" r="3.3" fill="#050505"/>
<circle cx="546.8" cy="197.1" r="3.3" fill="#050505"/>
<circle cx="287.4" cy="349.8" r="3" fill="#2f6f38" opacity="0.85"/>
<circle cx="299.6" cy="357.5" r="3" fill="#2f6f38" opacity="0.85"/>
<circle cx="312.7" cy="349.4" r="3" fill="#2f6f38" opacity="0.85"/>
<polyline points="706.6,272.6 499.6,443.2" fill="none" stroke="#e8484c" stroke-width="1"/>
<polyline points="724.9,276.6 506.8,464.5" fill="none" stroke="#e8484c" stroke-width="1.1"/>
</svg>
</div>
<div class="vstrip"></div>
<div class="handle"><i></i></div>
<div class="panel">
<div class="search"><span id="srch">Search View Map</span></div>
<div class="row" style="top:23.5px"><svg class="ch" style="left:6.5px;top:8.0px" width="10" height="8" viewBox="0 0 10 8"><path d="M1 1.8L5 5.8L9 1.8" fill="none" stroke="#2a2a2a" stroke-width="1.7"/></svg><svg class="ic" style="left:21.0px;top:3.5px" width="20" height="16" viewBox="0 0 20 16"><rect x="1" y="1" width="17.5" height="13.5" rx="1" fill="#dbe7fb" stroke="#5b8def" stroke-width="1"/><path d="M4 12.2V7.4L8 3.6L11 6.4Q15.2 5.6 15.6 9.4V12.2Z" fill="#f5f8ff" stroke="#3b78e7" stroke-width="1.1" stroke-linejoin="round"/><path d="M11.6 12V7" stroke="#3b78e7" stroke-width="1"/></svg><span class="lb" id="t0" style="left:46.0px;transform:scaleX(1.0842)">-> File/Info/Project Info</span></div>
<div class="row" style="top:46.6px"><svg class="ch" style="left:17.0px;top:8.0px" width="10" height="8" viewBox="0 0 10 8"><path d="M1 1.8L5 5.8L9 1.8" fill="none" stroke="#2a2a2a" stroke-width="1.7"/></svg><svg class="ic" style="left:31.3px;top:2.7px" width="20" height="16" viewBox="0 0 20 16"><path d="M1.5 15V2.2Q1.5 1 2.7 1H6.8Q7.6 1 8.1 1.9L8.8 3.2H17.3Q18.5 3.2 18.5 4.4V15Z" fill="#e9e9e9" stroke="#4a4a4a" stroke-width="1.1" stroke-linejoin="round"/></svg><span class="lb" id="t1" style="left:56.0px;transform:scaleX(0.9020)">DEFAULTS</span></div>
<div class="row sel" style="top:69.7px"><svg class="ic" style="left:41.9px;top:2.5px" width="20" height="18" viewBox="0 0 20 18"><path d="M3.2 2.4L12.9 0.8V16L3.6 12.2Z" fill="#f3f7ff" stroke="#4a86ee" stroke-width="1.2" stroke-linejoin="round"/><path d="M12.9 0.8L18.6 3V12.4L12.9 16Z" fill="#e6eeff" stroke="#4a86ee" stroke-width="1.2" stroke-linejoin="round"/></svg><span class="lb b" id="t2" style="left:66.6px;transform:scaleX(1.1021)">A | 3D (Entire Model)</span></div>
<div class="row" style="top:92.8px"><svg class="ic" style="left:41.9px;top:2.5px" width="20" height="18" viewBox="0 0 20 18"><path d="M3.2 2.4L12.9 0.8V16L3.6 12.2Z" fill="#f3f7ff" stroke="#4a86ee" stroke-width="1.2" stroke-linejoin="round"/><path d="M12.9 0.8L18.6 3V12.4L12.9 16Z" fill="#e6eeff" stroke="#4a86ee" stroke-width="1.2" stroke-linejoin="round"/></svg><span class="lb" id="t3" style="left:66.6px;transform:scaleX(1.0676)">A | 3D (Simplified)</span></div>
<div class="row" style="top:115.9px"><svg class="ch" style="left:28.8px;top:7.0px" width="8" height="10" viewBox="0 0 8 10"><path d="M2 1L6 5L2 9" fill="none" stroke="#8a8a8a" stroke-width="1.4"/></svg><svg class="ic" style="left:41.9px;top:2px" width="20" height="18" viewBox="0 0 20 18"><path d="M2 1.5H9.5V7H18.5V15.5H6" fill="#ddeafc" stroke="#3b78e7" stroke-width="1.2" stroke-linejoin="round"/><path d="M2 1.5V9.5" stroke="#3b78e7" stroke-width="1.2" fill="none"/><path d="M4.2 5.2V2.6H6.6V4.4H4.8" stroke="#3b78e7" stroke-width="0.9" fill="none"/><path d="M1.2 16.8Q1.2 12.6 4.4 12.6V11L7.2 13.4L4.4 15.6V14.2Q2.8 14.2 2.6 16.8Z" fill="#111"/></svg><span class="lb" id="t4" style="left:66.6px;transform:scaleX(0.9990)">A | WORKING VIEWS</span></div>
<div class="row" style="top:138.9px"><svg class="ch" style="left:28.8px;top:7.0px" width="8" height="10" viewBox="0 0 8 10"><path d="M2 1L6 5L2 9" fill="none" stroke="#8a8a8a" stroke-width="1.4"/></svg><svg class="ic" style="left:41.9px;top:2.7px" width="20" height="16" viewBox="0 0 20 16"><path d="M1.5 15V2.2Q1.5 1 2.7 1H6.8Q7.6 1 8.1 1.9L8.8 3.2H17.3Q18.5 3.2 18.5 4.4V15Z" fill="#e9e9e9" stroke="#4a4a4a" stroke-width="1.1" stroke-linejoin="round"/></svg><span class="lb" id="t5" style="left:66.6px;transform:scaleX(1.0330)">A | Ceiling Plans</span></div>
<div class="row" style="top:162.0px"><svg class="ch" style="left:17.0px;top:8.0px" width="10" height="8" viewBox="0 0 10 8"><path d="M1 1.8L5 5.8L9 1.8" fill="none" stroke="#2a2a2a" stroke-width="1.7"/></svg><svg class="ic" style="left:31.3px;top:2.7px" width="20" height="16" viewBox="0 0 20 16"><path d="M1.5 15V2.2Q1.5 1 2.7 1H6.8Q7.6 1 8.1 1.9L8.8 3.2H17.3Q18.5 3.2 18.5 4.4V15Z" fill="#e9e9e9" stroke="#4a4a4a" stroke-width="1.1" stroke-linejoin="round"/></svg><span class="lb" id="t6" style="left:56.0px;transform:scaleX(0.8810)">BCA</span></div>
<div class="row" style="top:185.1px"><svg class="ch" style="left:27.6px;top:8.0px" width="10" height="8" viewBox="0 0 10 8"><path d="M1 1.8L5 5.8L9 1.8" fill="none" stroke="#2a2a2a" stroke-width="1.7"/></svg><svg class="ic" style="left:41.9px;top:2.7px" width="20" height="16" viewBox="0 0 20 16"><path d="M1.5 15V2.2Q1.5 1 2.7 1H6.8Q7.6 1 8.1 1.9L8.8 3.2H17.3Q18.5 3.2 18.5 4.4V15Z" fill="#e9e9e9" stroke="#4a4a4a" stroke-width="1.1" stroke-linejoin="round"/></svg><span class="lb" id="t7" style="left:66.6px;transform:scaleX(0.8005)">BP</span></div>
<div class="row" style="top:208.2px"><svg class="ch" style="left:38.2px;top:8.0px" width="10" height="8" viewBox="0 0 10 8"><path d="M1 1.8L5 5.8L9 1.8" fill="none" stroke="#2a2a2a" stroke-width="1.7"/></svg><svg class="ic" style="left:52.5px;top:2.7px" width="20" height="16" viewBox="0 0 20 16"><path d="M1.5 15V2.2Q1.5 1 2.7 1H6.8Q7.6 1 8.1 1.9L8.8 3.2H17.3Q18.5 3.2 18.5 4.4V15Z" fill="#e9e9e9" stroke="#4a4a4a" stroke-width="1.1" stroke-linejoin="round"/></svg><span class="lb" id="t8" style="left:77.2px;transform:scaleX(0.9857)">2D PLANS</span></div>
<div class="row" style="top:231.3px"><svg class="ch" style="left:50.0px;top:7.0px" width="8" height="10" viewBox="0 0 8 10"><path d="M2 1L6 5L2 9" fill="none" stroke="#8a8a8a" stroke-width="1.4"/></svg><svg class="ic" style="left:63.1px;top:2px" width="20" height="18" viewBox="0 0 20 18"><path d="M2 1.5H9.5V7H18.5V15.5H6" fill="#ddeafc" stroke="#3b78e7" stroke-width="1.2" stroke-linejoin="round"/><path d="M2 1.5V9.5" stroke="#3b78e7" stroke-width="1.2" fill="none"/><path d="M4.2 5.2V2.6H6.6V4.4H4.8" stroke="#3b78e7" stroke-width="0.9" fill="none"/><path d="M1.2 16.8Q1.2 12.6 4.4 12.6V11L7.2 13.4L4.4 15.6V14.2Q2.8 14.2 2.6 16.8Z" fill="#111"/></svg><span class="lb" id="t9" style="left:87.8px;transform:scaleX(1.0015)">FLOOR PLANS (Accessibility)</span></div>
<div class="row" style="top:254.4px"><svg class="ch" style="left:50.0px;top:7.0px" width="8" height="10" viewBox="0 0 8 10"><path d="M2 1L6 5L2 9" fill="none" stroke="#8a8a8a" stroke-width="1.4"/></svg><svg class="ic" style="left:63.1px;top:2px" width="20" height="18" viewBox="0 0 20 18"><path d="M2 1.5H9.5V7H18.5V15.5H6" fill="#ddeafc" stroke="#3b78e7" stroke-width="1.2" stroke-linejoin="round"/><path d="M2 1.5V9.5" stroke="#3b78e7" stroke-width="1.2" fill="none"/><path d="M4.2 5.2V2.6H6.6V4.4H4.8" stroke="#3b78e7" stroke-width="0.9" fill="none"/><path d="M1.2 16.8Q1.2 12.6 4.4 12.6V11L7.2 13.4L4.4 15.6V14.2Q2.8 14.2 2.6 16.8Z" fill="#111"/></svg><span class="lb" id="t10" style="left:87.8px;transform:scaleX(0.9820)">VENTILATION PLANS</span></div>
<div class="row" style="top:277.5px"><svg class="ch" style="left:50.0px;top:7.0px" width="8" height="10" viewBox="0 0 8 10"><path d="M2 1L6 5L2 9" fill="none" stroke="#8a8a8a" stroke-width="1.4"/></svg><svg class="ic" style="left:63.1px;top:2px" width="20" height="18" viewBox="0 0 20 18"><path d="M2 1.5H9.5V7H18.5V15.5H6" fill="#ddeafc" stroke="#3b78e7" stroke-width="1.2" stroke-linejoin="round"/><path d="M2 1.5V9.5" stroke="#3b78e7" stroke-width="1.2" fill="none"/><path d="M4.2 5.2V2.6H6.6V4.4H4.8" stroke="#3b78e7" stroke-width="0.9" fill="none"/><path d="M1.2 16.8Q1.2 12.6 4.4 12.6V11L7.2 13.4L4.4 15.6V14.2Q2.8 14.2 2.6 16.8Z" fill="#111"/></svg><span class="lb" id="t11" style="left:87.8px;transform:scaleX(0.9388)">SGFA PLANS</span></div>
<div class="row" style="top:300.6px"><svg class="ch" style="left:50.0px;top:7.0px" width="8" height="10" viewBox="0 0 8 10"><path d="M2 1L6 5L2 9" fill="none" stroke="#8a8a8a" stroke-width="1.4"/></svg><svg class="ic" style="left:63.1px;top:2.5px" width="20" height="18" viewBox="0 0 20 18"><path d="M1.8 6.6L10 2.2L18.2 6.6" fill="#ddeafc" stroke="#3b78e7" stroke-width="1.2" stroke-linejoin="round"/><path d="M3.2 6.6H17V14.6H6.5" fill="#ddeafc" stroke="#3b78e7" stroke-width="1.2" stroke-linejoin="round"/><path d="M3.2 6.6V9.5" stroke="#3b78e7" stroke-width="1.2"/><path d="M1.2 16.8Q1.2 12.6 4.4 12.6V11L7.2 13.4L4.4 15.6V14.2Q2.8 14.2 2.6 16.8Z" fill="#111"/></svg><span class="lb" id="t12" style="left:87.8px;transform:scaleX(0.9452)">SECTIONS</span></div>
<div class="row" style="top:323.7px"><svg class="ch" style="left:50.0px;top:7.0px" width="8" height="10" viewBox="0 0 8 10"><path d="M2 1L6 5L2 9" fill="none" stroke="#8a8a8a" stroke-width="1.4"/></svg><svg class="ic" style="left:63.1px;top:2.5px" width="20" height="18" viewBox="0 0 20 18"><path d="M1.8 6.6L10 2.2L18.2 6.6" fill="#ddeafc" stroke="#3b78e7" stroke-width="1.2" stroke-linejoin="round"/><path d="M3.2 6.6H17V14.6H6.5" fill="#ddeafc" stroke="#3b78e7" stroke-width="1.2" stroke-linejoin="round"/><path d="M3.2 6.6V9.5" stroke="#3b78e7" stroke-width="1.2"/><path d="M1.2 16.8Q1.2 12.6 4.4 12.6V11L7.2 13.4L4.4 15.6V14.2Q2.8 14.2 2.6 16.8Z" fill="#111"/></svg><span class="lb" id="t13" style="left:87.8px;transform:scaleX(0.9541)">ELEVATIONS</span></div>
<div class="row" style="top:346.8px"><svg class="ch" style="left:39.4px;top:7.0px" width="8" height="10" viewBox="0 0 8 10"><path d="M2 1L6 5L2 9" fill="none" stroke="#8a8a8a" stroke-width="1.4"/></svg><svg class="ic" style="left:52.5px;top:2.7px" width="20" height="16" viewBox="0 0 20 16"><path d="M1.5 15V2.2Q1.5 1 2.7 1H6.8Q7.6 1 8.1 1.9L8.8 3.2H17.3Q18.5 3.2 18.5 4.4V15Z" fill="#e9e9e9" stroke="#4a4a4a" stroke-width="1.1" stroke-linejoin="round"/></svg><span class="lb" id="t14" style="left:77.2px;transform:scaleX(1.0252)">3D PLANS (Accessibility/Ventilation/SGFA)</span></div>
<div class="row" style="top:369.9px"><svg class="ch" style="left:18.2px;top:7.0px" width="8" height="10" viewBox="0 0 8 10"><path d="M2 1L6 5L2 9" fill="none" stroke="#8a8a8a" stroke-width="1.4"/></svg><svg class="ic" style="left:31.3px;top:2.7px" width="20" height="16" viewBox="0 0 20 16"><path d="M1.5 15V2.2Q1.5 1 2.7 1H6.8Q7.6 1 8.1 1.9L8.8 3.2H17.3Q18.5 3.2 18.5 4.4V15Z" fill="#e9e9e9" stroke="#4a4a4a" stroke-width="1.1" stroke-linejoin="round"/></svg><span class="lb" id="t15" style="left:56.0px;transform:scaleX(0.8519)">FSSD</span></div>
<div class="row" style="top:392.9px"><svg class="ch" style="left:18.2px;top:7.0px" width="8" height="10" viewBox="0 0 8 10"><path d="M2 1L6 5L2 9" fill="none" stroke="#8a8a8a" stroke-width="1.4"/></svg><svg class="ic" style="left:31.3px;top:2.7px" width="20" height="16" viewBox="0 0 20 16"><path d="M1.5 15V2.2Q1.5 1 2.7 1H6.8Q7.6 1 8.1 1.9L8.8 3.2H17.3Q18.5 3.2 18.5 4.4V15Z" fill="#e9e9e9" stroke="#4a4a4a" stroke-width="1.1" stroke-linejoin="round"/></svg><span class="lb" id="t16" style="left:56.0px;transform:scaleX(0.9762)">URA</span></div>
<div class="row" style="top:416.0px"><svg class="ch" style="left:18.2px;top:7.0px" width="8" height="10" viewBox="0 0 8 10"><path d="M2 1L6 5L2 9" fill="none" stroke="#8a8a8a" stroke-width="1.4"/></svg><svg class="ic" style="left:31.3px;top:2.7px" width="20" height="16" viewBox="0 0 20 16"><path d="M1.5 15V2.2Q1.5 1 2.7 1H6.8Q7.6 1 8.1 1.9L8.8 3.2H17.3Q18.5 3.2 18.5 4.4V15Z" fill="#e9e9e9" stroke="#4a4a4a" stroke-width="1.1" stroke-linejoin="round"/></svg><span class="lb" id="t17" style="left:56.0px;transform:scaleX(0.8824)">LTA</span></div>
<div class="row" style="top:439.1px"><svg class="ch" style="left:18.2px;top:7.0px" width="8" height="10" viewBox="0 0 8 10"><path d="M2 1L6 5L2 9" fill="none" stroke="#8a8a8a" stroke-width="1.4"/></svg><svg class="ic" style="left:31.3px;top:2.7px" width="20" height="16" viewBox="0 0 20 16"><path d="M1.5 15V2.2Q1.5 1 2.7 1H6.8Q7.6 1 8.1 1.9L8.8 3.2H17.3Q18.5 3.2 18.5 4.4V15Z" fill="#e9e9e9" stroke="#4a4a4a" stroke-width="1.1" stroke-linejoin="round"/></svg><span class="lb" id="t18" style="left:56.0px;transform:scaleX(0.9500)">NPARKS</span></div>
<div class="row" style="top:462.2px"><svg class="ch" style="left:18.2px;top:7.0px" width="8" height="10" viewBox="0 0 8 10"><path d="M2 1L6 5L2 9" fill="none" stroke="#8a8a8a" stroke-width="1.4"/></svg><svg class="ic" style="left:31.3px;top:2.7px" width="20" height="16" viewBox="0 0 20 16"><path d="M1.5 15V2.2Q1.5 1 2.7 1H6.8Q7.6 1 8.1 1.9L8.8 3.2H17.3Q18.5 3.2 18.5 4.4V15Z" fill="#e9e9e9" stroke="#4a4a4a" stroke-width="1.1" stroke-linejoin="round"/></svg><span class="lb" id="t19" style="left:56.0px;transform:scaleX(0.8571)">PUB</span></div>
<div class="row" style="top:485.3px"><svg class="ch" style="left:18.2px;top:7.0px" width="8" height="10" viewBox="0 0 8 10"><path d="M2 1L6 5L2 9" fill="none" stroke="#8a8a8a" stroke-width="1.4"/></svg><svg class="ic" style="left:31.3px;top:2.7px" width="20" height="16" viewBox="0 0 20 16"><path d="M1.5 15V2.2Q1.5 1 2.7 1H6.8Q7.6 1 8.1 1.9L8.8 3.2H17.3Q18.5 3.2 18.5 4.4V15Z" fill="#e9e9e9" stroke="#4a4a4a" stroke-width="1.1" stroke-linejoin="round"/></svg><span class="lb" id="t20" style="left:56.0px;transform:scaleX(0.9524)">NEA</span></div>
<div class="row" style="top:508.4px"><svg class="ch" style="left:18.2px;top:7.0px" width="8" height="10" viewBox="0 0 8 10"><path d="M2 1L6 5L2 9" fill="none" stroke="#8a8a8a" stroke-width="1.4"/></svg><svg class="ic" style="left:31.3px;top:2.7px" width="20" height="16" viewBox="0 0 20 16"><path d="M1.5 15V2.2Q1.5 1 2.7 1H6.8Q7.6 1 8.1 1.9L8.8 3.2H17.3Q18.5 3.2 18.5 4.4V15Z" fill="#e9e9e9" stroke="#4a4a4a" stroke-width="1.1" stroke-linejoin="round"/></svg><span class="lb" id="t21" style="left:56.0px;transform:scaleX(0.9180)">SCHEDULES</span></div>
<div class="row" style="top:531.5px"><svg class="ch" style="left:18.2px;top:7.0px" width="8" height="10" viewBox="0 0 8 10"><path d="M2 1L6 5L2 9" fill="none" stroke="#8a8a8a" stroke-width="1.4"/></svg><svg class="ic" style="left:31.3px;top:2.7px" width="20" height="16" viewBox="0 0 20 16"><path d="M1.5 15V2.2Q1.5 1 2.7 1H6.8Q7.6 1 8.1 1.9L8.8 3.2H17.3Q18.5 3.2 18.5 4.4V15Z" fill="#e9e9e9" stroke="#4a4a4a" stroke-width="1.1" stroke-linejoin="round"/></svg><span class="lb" id="t22" style="left:56.0px;transform:scaleX(0.9385)">COVER PAGE</span></div>
<div class="tb">
<svg style="left:7px;top:4px" width="26" height="24" viewBox="0 0 26 24"><path d="M2.5 20V9.5H13" fill="none" stroke="#333" stroke-width="1.2"/><path d="M2.5 20H17V14" fill="none" stroke="#333" stroke-width="1.2"/><path d="M5 19V14.4L8.6 11.2L11 13.4Q14.2 13 14.4 16V19Z" fill="#f0f0f0" stroke="#333" stroke-width="1.1" stroke-linejoin="round"/><circle cx="19" cy="8" r="4.6" fill="#eaf1ff" stroke="#3b78e7" stroke-width="1.1"/><path d="M16.4 8H21.6M19 5.4V10.6" stroke="#3b78e7" stroke-width="1.1"/></svg>
<svg style="left:37px;top:4px" width="26" height="24" viewBox="0 0 26 24"><path d="M3.5 15V9.5H13" fill="none" stroke="#333" stroke-width="1.2"/><path d="M8 20H17V14" fill="none" stroke="#333" stroke-width="1.2"/><path d="M7 18V14.4L10 11.6L12 13.4Q14.6 13 14.8 16V18.6H8" fill="#f0f0f0" stroke="#333" stroke-width="1.1" stroke-linejoin="round"/><path d="M1.6 22.6Q1.6 18 4.8 18V16.4L7.8 19L4.8 21.4V20Q3.2 20 3 22.6Z" fill="#111"/><circle cx="19" cy="8" r="4.6" fill="#eaf1ff" stroke="#3b78e7" stroke-width="1.1"/><path d="M16.4 8H21.6M19 5.4V10.6" stroke="#3b78e7" stroke-width="1.1"/></svg>
<svg style="left:69px;top:4px" width="26" height="24" viewBox="0 0 26 24"><path d="M2.5 20V9.8H6.2L7.6 12H13" fill="none" stroke="#333" stroke-width="1.2" stroke-linejoin="round"/><path d="M2.5 20H17.5V14" fill="none" stroke="#333" stroke-width="1.2"/><circle cx="19" cy="8" r="4.6" fill="#eaf1ff" stroke="#3b78e7" stroke-width="1.1"/><path d="M16.4 8H21.6M19 5.4V10.6" stroke="#3b78e7" stroke-width="1.1"/></svg>
<svg style="left:103px;top:11px" width="18" height="14" viewBox="0 0 18 14"><rect x="1.2" y="1.2" width="14.6" height="11.4" rx="1.2" fill="#e6efff" stroke="#3b78e7" stroke-width="1.3"/><path d="M1.2 3.4H15.8" stroke="#3b78e7" stroke-width="1.6"/><path d="M4 6.6H5.4M7 6.6H13M4 9.4H5.4M7 9.4H13" stroke="#3b78e7" stroke-width="1.2"/></svg>
<svg style="left:134px;top:9px" width="18" height="18" viewBox="0 0 18 18"><path d="M2.2 2.2L14.6 15.4M14.6 2.2L2.2 15.4" stroke="#e8472b" stroke-width="1.8" fill="none"/></svg>
</div>
</div>
</div>
</body></html>
